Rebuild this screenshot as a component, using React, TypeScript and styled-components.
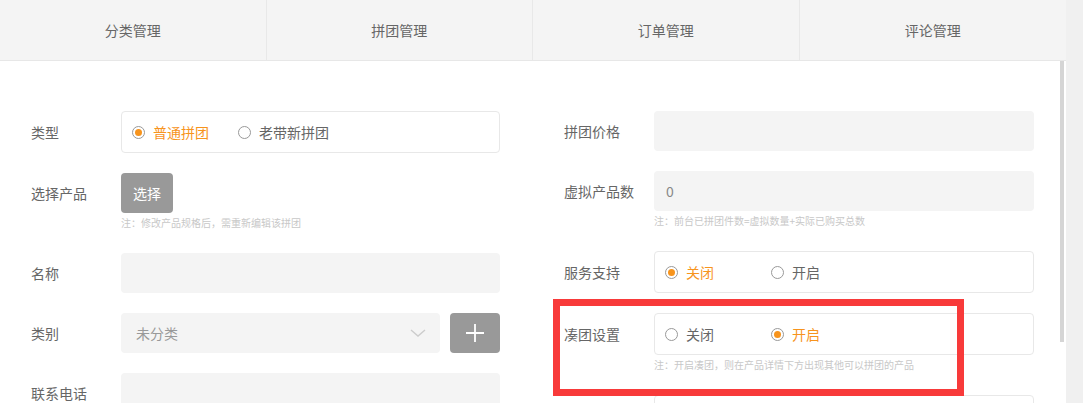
import React from "react";
import styled, { createGlobalStyle } from "styled-components";

const Global = createGlobalStyle`
  html, body { margin: 0; padding: 0; background: #fff; }
  body { font-family: "Noto Sans CJK SC", "Noto Sans", sans-serif; color: #666; overflow: hidden; }
  * { box-sizing: border-box; }
`;

const ORANGE = "#f7941d";

const Page = styled.div`
  display: flex;
  width: 1083px;
  height: 403px;
  overflow: hidden;
  position: relative;
`;

const MainColumn = styled.div`
  width: 1066px;
  display: flex;
  flex-direction: column;
`;

const SideStrip = styled.div`
  flex: 1;
  background: #f0f0f0;
`;

const TabBar = styled.div`
  display: grid;
  grid-template-columns: repeat(4, 1fr);
  height: 61px;
  background: #f4f4f4;
  border-bottom: 1px solid #e7e7e7;
`;

const Tab = styled.div<{ $last?: boolean }>`
  display: flex;
  align-items: center;
  justify-content: center;
  font-size: 14px;
  color: #666;
  border-right: ${(p) => (p.$last ? "none" : "1px solid #e8e8e8")};
`;

const Body = styled.div`
  flex: 1;
  display: flex;
  min-height: 0;
`;

const Content = styled.div`
  flex: 1;
  padding: 50px 0 0 31px;
  display: grid;
  grid-template-columns: 469px 470px;
  column-gap: 64px;
  align-items: start;
`;

const ScrollTrack = styled.div`
  width: 6px;
`;

const Thumb = styled.div`
  width: 4px;
  height: 281px;
  background: #d5d5d5;
`;

const Column = styled.div`
  display: flex;
  flex-direction: column;
  gap: 20px;
`;

const Row = styled.div`
  display: grid;
  grid-template-columns: 90px 1fr;
  align-items: start;
`;

const Label = styled.div<{ $h: number }>`
  height: ${(p) => p.$h}px;
  display: flex;
  align-items: center;
  font-size: 14px;
  color: #666;
  white-space: nowrap;
`;

const Field = styled.div`
  display: flex;
  flex-direction: column;
`;

const Note = styled.div`
  height: 20px;
  padding-top: 3px;
  font-size: 10px;
  line-height: 14px;
  color: #c8c8c8;
  white-space: nowrap;
`;

const RadioBox = styled.div`
  height: 42px;
  border: 1px solid #e8e8e8;
  border-radius: 4px;
  background: #fff;
  display: flex;
  align-items: center;
  padding-left: 10px;
`;

const RadioOption = styled.label<{ $checked?: boolean }>`
  width: 106px;
  display: flex;
  align-items: center;
  gap: 8px;
  font-size: 14px;
  color: ${(p) => (p.$checked ? ORANGE : "#666")};
`;

const RadioCircle = styled.span<{ $checked?: boolean }>`
  width: 13px;
  height: 13px;
  border-radius: 50%;
  border: 1px solid #999;
  display: flex;
  align-items: center;
  justify-content: center;
  flex: none;
  &::after {
    content: "";
    width: 7px;
    height: 7px;
    border-radius: 50%;
    background: ${(p) => (p.$checked ? ORANGE : "transparent")};
  }
`;

const Input = styled.div`
  height: 40px;
  background: #f4f4f4;
  border-radius: 4px;
  display: flex;
  align-items: center;
  padding-left: 12px;
  font-size: 14px;
  color: #888;
`;

const GrayButton = styled.div<{ $w: number }>`
  width: ${(p) => p.$w}px;
  height: 40px;
  background: #999;
  border-radius: 4px;
  color: #fff;
  font-size: 14px;
  display: flex;
  align-items: center;
  justify-content: center;
  flex: none;
`;

const SelectRow = styled.div`
  display: flex;
  gap: 10px;
`;

const Select = styled.div`
  flex: 1;
  height: 40px;
  background: #f4f4f4;
  border-radius: 4px;
  display: flex;
  align-items: center;
  justify-content: space-between;
  padding: 0 14px 0 15px;
  font-size: 14px;
  color: #999;
`;

const Annotation = styled.div`
  position: absolute;
  left: 553px;
  top: 299px;
  width: 411px;
  height: 97px;
  border: 7px solid #f83a3a;
  pointer-events: none;
`;

const Radio = ({ label, checked }: { label: string; checked?: boolean }) => (
  <RadioOption $checked={checked}>
    <RadioCircle $checked={checked} />
    {label}
  </RadioOption>
);

export default function App() {
  return (
    <>
      <Global />
      <Page>
        <MainColumn>
          <TabBar>
            <Tab>分类管理</Tab>
            <Tab>拼团管理</Tab>
            <Tab>订单管理</Tab>
            <Tab $last>评论管理</Tab>
          </TabBar>
          <Body>
            <Content>
              <Column>
                <Row>
                  <Label $h={42}>类型</Label>
                  <RadioBox>
                    <Radio label="普通拼团" checked />
                    <Radio label="老带新拼团" />
                  </RadioBox>
                </Row>
                <Row>
                  <Label $h={40}>选择产品</Label>
                  <Field>
                    <GrayButton $w={52}>选择</GrayButton>
                    <Note>注：修改产品规格后，需重新编辑该拼团</Note>
                  </Field>
                </Row>
                <Row>
                  <Label $h={40}>名称</Label>
                  <Input />
                </Row>
                <Row>
                  <Label $h={40}>类别</Label>
                  <SelectRow>
                    <Select>
                      未分类
                      <svg width="16" height="8" viewBox="0 0 16 8">
                        <polyline points="1,1 8,7 15,1" fill="none" stroke="#cccccc" strokeWidth="1.4" />
                      </svg>
                    </Select>
                    <GrayButton $w={50}>
                      <svg width="20" height="20" viewBox="0 0 20 20">
                        <path d="M10 1v18M1 10h18" stroke="#fff" strokeWidth="1.8" />
                      </svg>
                    </GrayButton>
                  </SelectRow>
                </Row>
                <Row>
                  <Label $h={40}>联系电话</Label>
                  <Input />
                </Row>
              </Column>
              <Column>
                <Row>
                  <Label $h={40}>拼团价格</Label>
                  <Input />
                </Row>
                <Row>
                  <Label $h={40}>虚拟产品数</Label>
                  <Field>
                    <Input>0</Input>
                    <Note>注：前台已拼团件数=虚拟数量+实际已购买总数</Note>
                  </Field>
                </Row>
                <Row>
                  <Label $h={42}>服务支持</Label>
                  <RadioBox>
                    <Radio label="关闭" checked />
                    <Radio label="开启" />
                  </RadioBox>
                </Row>
                <Row>
                  <Label $h={42}>凑团设置</Label>
                  <Field>
                    <RadioBox>
                      <Radio label="关闭" />
                      <Radio label="开启" checked />
                    </RadioBox>
                    <Note>注：开启凑团，则在产品详情下方出现其他可以拼团的产品</Note>
                  </Field>
                </Row>
                <Row>
                  <Label $h={42} />
                  <RadioBox />
                </Row>
              </Column>
            </Content>
            <ScrollTrack>
              <Thumb />
            </ScrollTrack>
          </Body>
        </MainColumn>
        <SideStrip />
        <Annotation />
      </Page>
    </>
  );
}
